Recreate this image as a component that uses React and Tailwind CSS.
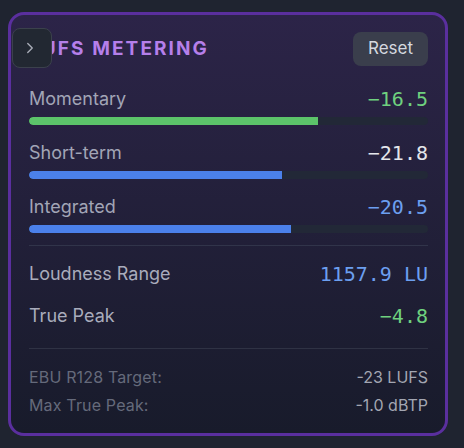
import { ChevronRight } from 'lucide-react'

const METERS = [
  { label: 'Momentary', value: '−16.5', fill: 72.4, valueColor: 'text-[#6fd17f]', barColor: 'bg-[#5cc46a]' },
  { label: 'Short-term', value: '−21.8', fill: 63.4, valueColor: 'text-[#e4e6eb]', barColor: 'bg-[#4b80ea]' },
  { label: 'Integrated', value: '−20.5', fill: 65.7, valueColor: 'text-[#6c9ff0]', barColor: 'bg-[#4b80ea]' },
]

const STATS = [
  { label: 'Loudness Range', value: '1157.9 LU', color: 'text-[#6c9ff0]' },
  { label: 'True Peak', value: '−4.8', color: 'text-[#6fd17f]' },
]

const TARGETS = [
  { label: 'EBU R128 Target:', value: '-23 LUFS' },
  { label: 'Max True Peak:', value: '-1.0 dBTP' },
]

function Meter({ label, value, fill, valueColor, barColor }) {
  return (
    <div className="mt-[14px] first:mt-0">
      <div className="flex items-center justify-between h-7">
        <span className="text-lg text-[#a2a5b6]">{label}</span>
        <span className={`font-['DejaVu_Sans_Mono',monospace] text-xl ${valueColor}`}>{value}</span>
      </div>
      <div className="mt-1 h-2 rounded-full bg-[#222837] overflow-hidden">
        <div className={`h-full rounded-l-full ${barColor}`} style={{ width: `${fill}%` }} />
      </div>
    </div>
  )
}

export default function App() {
  return (
    <div className="w-[464px] h-[448px] bg-[#1f2430] pt-3 pl-2 font-['Inter',sans-serif] relative">
      {/* Panel */}
      <div className="w-[440px] h-[424px] rounded-[16px] border-[3px] border-[#5a2f9e] bg-gradient-to-b from-[#2c2448] to-[#181b2b] pt-[17px] pl-[18px] pr-[17px] pb-[17px]">
        <div className="flex items-center justify-between h-[34px]">
          <h2 className="text-[19px] font-bold tracking-[0.11em] text-[#b57fea]">LUFS METERING</h2>
          <button className="h-[34px] px-[15px] rounded-lg bg-[#3a3e4c] text-[#d5d8df] text-[17px]">
            Reset
          </button>
        </div>

        <div className="mt-[19px]">
          {METERS.map((m) => (
            <Meter key={m.label} {...m} />
          ))}
        </div>

        <div className="mt-3 h-px bg-[#31344a]" />

        <div className="mt-[14px] flex flex-col gap-[14px]">
          {STATS.map((s) => (
            <div key={s.label} className="flex items-center justify-between h-7">
              <span className="text-lg text-[#a9acbc]">{s.label}</span>
              <span className={`font-['DejaVu_Sans_Mono',monospace] text-xl ${s.color}`}>{s.value}</span>
            </div>
          ))}
        </div>

        <div className="mt-[18px] h-px bg-[#2f3244]" />

        <div className="mt-[17px] flex flex-col gap-[6px]">
          {TARGETS.map((t) => (
            <div key={t.label} className="flex items-center justify-between h-[22px] text-[16px]">
              <span className="text-[#656a7b] tracking-[0.01em]">{t.label}</span>
              <span className="text-[#a3a6b2]">{t.value}</span>
            </div>
          ))}
        </div>
      </div>

      {/* Collapse toggle sitting over the panel corner */}
      <button className="absolute left-3 top-7 w-10 h-10 rounded-lg bg-[#222832] border border-[#3b414c] flex items-center justify-center pr-1 text-[#a9adb8]">
        <ChevronRight size={18} strokeWidth={1.8} />
      </button>
    </div>
  )
}
